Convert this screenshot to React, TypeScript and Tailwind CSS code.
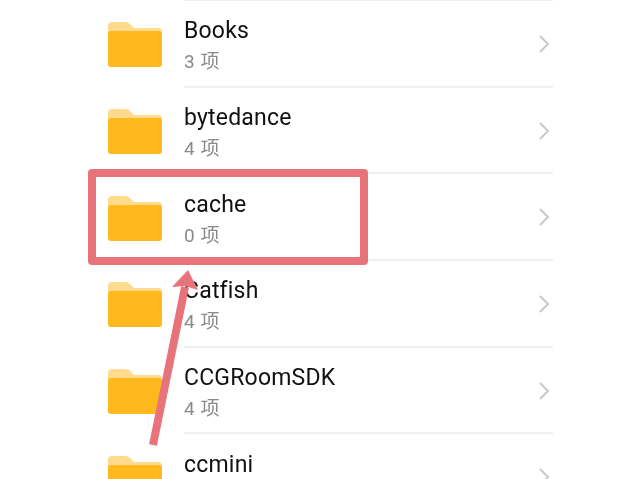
const rows = [
  { name: "Books", sub: "3 项" },
  { name: "bytedance", sub: "4 项" },
  { name: "cache", sub: "0 项" },
  { name: "Catfish", sub: "4 项" },
  { name: "CCGRoomSDK", sub: "4 项" },
  { name: "ccmini", sub: "" },
];

function Folder() {
  return (
    <svg width="54" height="46" viewBox="0 0 54 46" className="shrink-0">
      <path d="M0 5a4 4 0 0 1 4-4h13c3 0 4 1 6 3l3 3h24a4 4 0 0 1 4 4v10H0z" fill="#ffdb8e" />
      <path d="M0 13a3 3 0 0 1 3-3h48a3 3 0 0 1 3 3v30a3 3 0 0 1-3 3H3a3 3 0 0 1-3-3z" fill="#ffb91f" />
    </svg>
  );
}

function Row({ name, sub }: { name: string; sub: string }) {
  return (
    <div className="flex h-[86.7px] shrink-0 items-center pl-[108px]">
      <Folder />
      <div className="ml-[22px] flex h-full w-[369px] items-center justify-between border-b-2 border-[#f0f0f0]">
        <div className="flex flex-col pt-[6px]">
          <span className="text-[23px] leading-[30px] tracking-[0.2px] text-[#111111]">{name}</span>
          <span className="mt-[2px] h-[28px] text-[19px] leading-[28px] tracking-[0.5px] text-[#8a8a8a]">{sub}</span>
        </div>
        <svg width="12" height="20" viewBox="0 0 12 20" className="mt-[1px] mr-[3px]">
          <path d="M2 2l8 8-8 8" fill="none" stroke="#c6c6c6" strokeWidth="1.8" />
        </svg>
      </div>
    </div>
  );
}

export default function App() {
  return (
    <div
      className="relative h-[479px] w-[640px] overflow-hidden bg-white blur-[0.4px]"
      style={{ fontFamily: '"Roboto", "Noto Sans CJK SC", sans-serif' }}
    >
      <div className="ml-[184px] h-[1px] w-[369px] bg-[#f0f0f0]" />
      <div className="flex flex-col">
        {rows.map((r) => (
          <Row key={r.name} {...r} />
        ))}
      </div>
      <div className="absolute left-[88px] top-[169px] h-[96px] w-[280px] rounded-[4px] border-[8px] border-[#e8737b]" />
      <svg className="absolute left-[140px] top-[262px]" width="60" height="190" viewBox="0 0 60 190">
        <path d="M13 183L45 25" stroke="#e8737b" strokeWidth="8" fill="none" />
        <path d="M48 8L58 28L45 24L32 25z" fill="#e8737b" />
      </svg>
    </div>
  );
}
